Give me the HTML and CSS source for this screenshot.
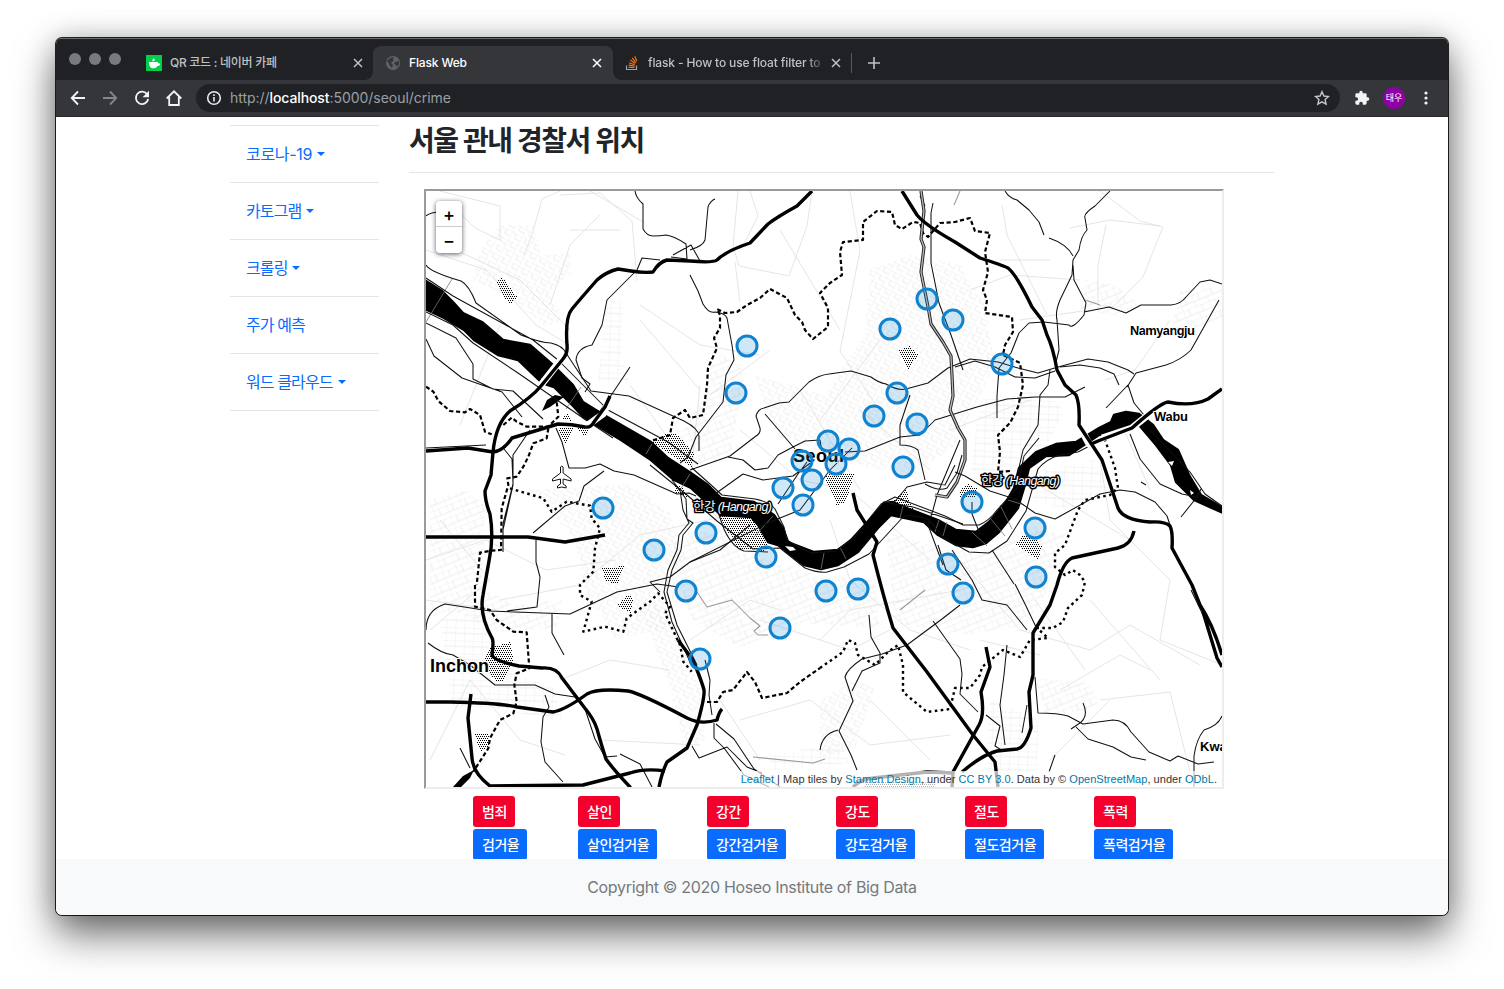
FILE: index.html
```html
<!DOCTYPE html>
<html lang="ko">
<head>
<meta charset="utf-8">
<title>Flask Web</title>
<link rel="stylesheet" href="styles.css">
</head>
<body>
<div class="window">
  <div class="tabstrip">
    <div class="lights"><i></i><i></i><i></i></div>
    <div class="tab tab-first">
      <svg class="favicon" viewBox="0 0 16 16"><path fill="#03cf4a" d="M0 0h16v16H0z"/><path fill="#fff" d="M3 7h9v1.200h1.200c1.400 0 1.200 2.900-2 2.900-.7 1.500-1.600 2.200-3.700 2.200C4.300 13.300 3 11 3 7zM7 3.200l2 1.300-1 1.700H6.300z"/></svg>
      <span class="tab-title t1">QR 코드 : 네이버 카페</span>
      <svg class="close" viewBox="0 0 10 10"><path d="M1 1l8 8M9 1L1 9"/></svg>
    </div>
    <div class="tab tab-active">
      <svg class="favicon" viewBox="0 0 16 16"><circle cx="8" cy="8" r="7" fill="#5f6368"/><path fill="#35363a" d="M2 6l3-3 4-1-1 2 1 1-3 3 2 2-1 3-2-2-1-2zM10 7l4-1v3l-2 3-1-2-2-1z"/></svg>
      <span class="tab-title t2">Flask Web</span>
      <svg class="close" viewBox="0 0 10 10"><path d="M1 1l8 8M9 1L1 9"/></svg>
    </div>
    <div class="tab tab-last">
      <svg class="favicon" viewBox="0 0 16 16" fill="none"><path stroke="#9aa6b0" stroke-width="1.200" d="M2.500 10.500v4h10v-4"/><path stroke="#f2711c" stroke-width="1.200" d="M4.500 12.400h6M4.600 10.200l6 .8M5 7.700l5.700 2M6.300 5l5 3.500M8.200 2.800l3.700 4.700M10.800 1.200l2 5"/></svg>
      <span class="tab-title t3">flask - How to use float filter to</span>
      <svg class="close" viewBox="0 0 10 10"><path d="M1 1l8 8M9 1L1 9"/></svg>
    </div>
    <svg class="plus" viewBox="0 0 12 12"><path d="M6 0v12M0 6h12"/></svg>
  </div>
  <div class="toolbar">
    <svg class="ico" viewBox="0 0 16 16"><path d="M15 8H2M8 1.500L1.700 8 8 14.500"/></svg>
    <svg class="ico dim" viewBox="0 0 16 16"><path d="M1 8h13M8 1.500L14.300 8 8 14.500"/></svg>
    <svg class="ico" viewBox="0 0 16 16"><path d="M13.300 4.500A6.200 6.200 0 1 0 14.200 9"/><path class="solid" d="M15 .8v6.400H8.600z"/></svg>
    <svg class="ico" viewBox="0 0 16 16"><path d="M.7 8.500L8 1.300l7.300 7.200M3.200 7v8h9.600V7"/></svg>
    <div class="omnibox">
      <svg class="info" viewBox="0 0 16 16"><circle cx="8" cy="8" r="6.300"/><path d="M8 7v4.500M8 4.300V6"/></svg>
      <span class="url">http://<b>localhost</b>:5000/seoul/crime</span>
      <svg class="star" viewBox="0 0 16 16"><path d="M8 1.800l1.900 4.200 4.600.5-3.400 3.100 1 4.500L8 11.800l-4.100 2.300 1-4.500-3.400-3.100 4.600-.5z"/></svg>
    </div>
    <svg class="puzzle" viewBox="0 0 24 24"><path d="M20.500 11H19V7a2 2 0 0 0-2-2h-4V3.500a2.500 2.500 0 0 0-5 0V5H4a2 2 0 0 0-2 2v3.800h1.500a2.700 2.700 0 0 1 0 5.400H2V20a2 2 0 0 0 2 2h3.800v-1.500a2.700 2.700 0 0 1 5.400 0V22H17a2 2 0 0 0 2-2v-4h1.500a2.500 2.500 0 0 0 0-5z"/></svg>
    <span class="avatar">태우</span>
    <svg class="dots" viewBox="0 0 4 14"><circle cx="2" cy="2" r="1.600"/><circle cx="2" cy="7" r="1.600"/><circle cx="2" cy="12" r="1.600"/></svg>
  </div>
  <div class="page">
    <div class="container">
      <ul class="side">
        <li><a class="s1 drop">코로나-19</a></li>
        <li><a class="drop">카토그램</a></li>
        <li><a class="drop">크롤링</a></li>
        <li><a>주가 예측</a></li>
        <li><a class="drop">워드 클라우드</a></li>
      </ul>
      <main class="content">
        <h3>서울 관내 경찰서 위치</h3>
        <hr>
        <div class="frame">
          <svg class="map" viewBox="426 191 796 596">
            <defs>
              <pattern id="dot" width="2" height="4" patternUnits="userSpaceOnUse"><path d="M0 0h1v1H0zM1 2h1v1H1z"/></pattern>
              <pattern id="grid" width="11" height="9" patternUnits="userSpaceOnUse" patternTransform="rotate(28)"><path d="M0 0h11M0 0v9M5 0v5M5 5h6" class="pl"/></pattern>
              <pattern id="grid2" width="14" height="12" patternUnits="userSpaceOnUse" patternTransform="rotate(-22)"><path d="M0 0h14M0 0v12M6 0v7M0 7h14" class="pl"/></pattern>
              <pattern id="grid3" width="9" height="13" patternUnits="userSpaceOnUse" patternTransform="rotate(2)"><path d="M0 0h9M0 0v13M0 6h9" class="pl"/></pattern>
            </defs>
            <g class="town">
              <path fill="url(#grid)" d="M480 250l20-25 33 0 8 30 28-2 3 20-22 18 15 30-20 5-32-25-40-20z"/>
              <path fill="url(#grid3)" d="M605 300l18 2-2 60 10 10-4 12-30-2 4-25z"/>
              <path fill="url(#grid2)" d="M430 500l35-10 20 15-3 80 30 20 50-5-5 28-60 4-40-20-27 4z"/>
              <path fill="url(#grid)" d="M530 490l100-6 40 30 15 50-20 65-50 10-30-50-10-50z"/>
              <path fill="url(#grid2)" d="M670 540l50-12 45 30 60 20 50 0 5 50-80-5-60 25-50-30z"/>
              <path fill="url(#grid2)" d="M885 530l60 20 50 0 35-25 35 10-20 60-20 30-60 10-70-12z"/>
              <path fill="url(#grid)" d="M870 270l40-15 50 10 25 40 10 60-40 80-40 30-60-10-80-30-20-60 70 20 40-60z"/>
              <path fill="url(#grid2)" d="M715 350l30 20-15 90-40 8-15-25 30-50z"/>
              <path fill="url(#grid3)" d="M980 400l60-10 25 20-25 50-30 20-40-5zM1045 470l50-10 14 30-40 20-38-10z"/>
              <path fill="url(#grid2)" d="M1085 280l30 5 25 20-25 10-35-5zM1035 678l55 5 10 25-55 8zM1180 290l42-3v30l-30 15-20-5z"/>
              <path fill="url(#grid3)" d="M440 620l45-8 8 40 30 25 30 10 10 35-50-10-60-5zM770 755l70-12 10 20-80 8zM990 700l50 20-5 66h-50z"/>
              <path fill="url(#grid)" d="M640 600l30 10 30 60 5 70-20 10-15-60zM820 700l35-20 20 8-20 60-35 10z"/>
            </g>
            <g class="faint">
              <path d="M440 191l60 15v35M500 240l-25-12-25-25M560 191l-18 8-10 36-8 20M560 195l40-2 32 28 5 60M590 191l55 32M570 330l-50-50-60-28M600 215l-30 30-20 60M426 250l60 20 50 55 30 18M570 230h50M500 325l-40 100M640 305l60 40 60 10M812 191l-5 35-18 50-50-10-6-20 5-55M750 191l8 25-15 30M735 262l5 40M770 350l-60 45M1002 205l5 30 40 80M1100 191l40 30 23 6-20 50-30 30-15-2 0-40 8-40M1070 228l40-8 50 6M970 290l40-15 70 5M1020 320l70-10M1170 320l-35 50-30 10M1050 260h-50"/>
              <path d="M426 560l60-20 60 30 70-10M440 520l50 60-60 50M500 600l80-15 60-50 90-20M630 385l50 70M700 385l-10 100 50 60M850 191l10 60-20 100 40 60M740 430l60 50 50 10 80 70M830 520l20 60 60 50 60 20M690 640l60-40 30 10M820 640l30-30 110-20M960 560l60 70 70 20 40-25 70 40M1090 600l70 80M1100 460l10 60 60 60-10 60 62 25M1120 420l30 70M1030 480l100 60M430 760l40-80 50 60 45 15M560 680l50-20 60 10M600 740l100 5M740 720l70-20 60 45 80-10M760 760l-40-60M870 700l60 60M1060 690l60-35 30 15M1100 700l70-8 20 80M980 640l60 15M1035 600l50 70M1050 760l60-60"/>
              <path d="M780 230l60 100M800 390l60 100M880 340l-60 80M860 410l70 60M1030 400l-80 30M640 320l60 70M426 600l70 10M760 620l90 30 40-20"/>
            </g>
            <g class="half" fill="url(#dot)">
              <path d="M496 281l6-4 15 20-8 8z"/><path d="M898 350l12-4 8 9-10 15z"/><path d="M558 427h17l-10 18zM575 425h18l-9 12zM560 418l8-4 4 7z"/><path d="M652 442l13-8h12l17 20-2 14z"/><path d="M674 484l10 4 5 10-14-6z"/><path d="M825 477l5-3h24l-5 18-4 10-8 4z"/><path d="M892 502l14-12 8 22z"/><path d="M720 516l30 1 18 25-3 9-28-2z"/><path d="M960 490l8-6 10 5-3 8h-15z"/><path d="M1016 545l6-10 14 4 6 8-4 13z"/><path d="M602 568l22-2-6 12 2 6-14-2z"/><path d="M617 606l11-12 5 3-2 16z"/><path d="M484 662l5-14 22-6 2 18-10 22-8-1z"/><path d="M475 733h13l2 12-10 7z"/><path d="M865 781h70v6h-70z"/>
            </g>
            <path class="water" d="M426 281l16 10 11 11 10 11 19 9 21 18 27 5 23 20 20 20 10 17 21 13 47 27 17 16 23 15 17 12 13 13 33 4 20 13 9 13 5 14 26 10 24-2 13-10 20-22 13-15 9-1 11 5 34 13 18 10 20 2 13-10 17-20 8-14 5-20 17-16 20-8 20-2 23-14 12-6 3-7 12-3 13 2 14 11 10 15 15 10 11 25 12 20 22 13v5l-29-13-18-18-5-17-15-20-17-20-6 3-34 7-30 20-23 1-17 12-5 20-6 20-19 24-13 11-13 4-17-2-18-10-14-13-33-7-13 13-20 24-20 13-17 4-17-4-26-20-10-3-10-17-7-8-30-2-30-27-17-8-23-20-30-20-37-22-10-11-20-20-12-4-24-23-20-5-24-15-10-10-20-12-17-8z"/>
            <path d="M453 787l10-11 11-6-4 8-9 9zM547 400l8-5 9 2-14 10-8 4z"/>
            <path class="wht" d="M785 546l8 1 3 3-6 1zM1168 462l6-1-2 5zM1190 490l4 3-3 2zM541 379l5-3-2 6z"/>
            <g class="bridge"><path d="M452 279l-26 43M581 387l-15 22M652 444l-6 10M690 474l-10 16M773 516l-20 22M824 553l-3 16M840 547l6 12M903 506l-3 12M939 520l-4 12M947 522l-4 14M1000 505l12 24M990 518l15 18M972 532l15 14M1008 500l16 5"/></g>
            <g class="bound" transform="translate(420 385) scale(.33333)">
              <path d="M18 5l22 15 15 28 35 30 45 4 15-10 30 18 15 50 20 8M250 120l25-22 15 12 30 15 65 0 30-30-5-45M385 130l-5 30-40 15-15 40-15 30-20 30-28 5 3 20-20 70-2 125-28 2-35 6-10 97"/>
              <path class="dotty" d="M270 310l100 30 25 40 45-30 70 12 5 38 25 30-15 60-5 70-40 40 0 30 35 20-25 90 65-15 55 15 10-40 70-50 25-25 35 40-15 20 45 95 10 50 25 30"/>
              <path d="M165 600l0 65 45 10 20 30 50 35 40 2 8 108-38 15-7 35 7 50-10 35-40 20-30 55-5 30-45 70"/>
            </g>
            <g class="bound">
              <path d="M707 702l10 0 6-10 10-2 14-18 8 10 7 16 25-5 13-11 20-14"/>
              <path class="dotty" d="M820 668l23-16 5-12 7 3 3 12 17 10 13-13 10-7 5 20 0 27 24 20 23-3 5-21 15 0 10-13 2-8 21-17 17 7 10-17 18-2-11-10 16 0 10-6 5-14 14-13 3-13-5-7-7-5-8 5-10-8 0-14 10-8 13-35 7-10 25-5 8-7-3-20-10-28"/>
              <path d="M1010 471l-12 1 2-20-2-17 12-12 8-16 5-22-3-22-17-8 2-10 8-13-1-15-27-4 2-13-4-10 5-18-3-20 5-19-15-2-5-13-15 4-15 1-12 14-5-4-3-10-7-1-11 7-7-4-3-13-15-1-14 11 0 18-20 2-3 10 2 23-12 8-10 10 8 15 0 19-15 12-8-9-3-8-7-7-8-17-17-9-10 9-13 7-10 7-12 1-8-4 3 6 0 13-6 10 3 10-9 20-1 17-4 30-13 3-5-8-12 8-3 17-22 7"/>
            </g>
            <g class="road">
              <path d="M426 278l27 18 80 44 25 20 20 20 30 30 60 32 30 22M426 312l27 13 20 18 45 30 65 45 30 20M426 323l30 15 17 26v15l20 10 20 2 30 28M426 339l8 17 28 22 40 14 20 25M426 265q4 7 35 16 8 4 15 22l45 32q20 8 30 8 12 3 15 10l25 38 38 5 55 25q15 8 15 15v15M426 216q4-4 15-4"/>
              <path d="M635 191q1 7 8 13v25q4 7 10 7 8 0 13-1 8 1 20 9l1 15-16-2M700 261l-9-16-18 10M690 250q13-4 15-10l3-33q2-6 7-8M690 275l8 16 5 13q6 10 12 8 10 1 12 6l5 27 2 15-8 15-3 27-27 35-8 20-8 6M660 260l-18-2-5 12-30 30-5 25-10 20q-15 3-16 15l6 18 8 6-5 8M630 367l-18 27-14 20"/>
              <path d="M426 448l60-3M556 428l6 14 7 26h16l15-4 14 7 20 4 43 19 12-1 7 3M604 471l-20 15-5 15-14 5-32 27M504 449l8 10 1 25-10 40v28M530 430l-17 25v30l-10 45M536 540v22l4 15-3 30-30 4M426 630q0-20 19-26l45 7 80 3 47-22 40-8 22 3M552 613v20l12 22M428 643q14 11 25 12l17 10 25 20 40 0 20 9 20 3 10 12 10 30 10 18 12-1M545 695l4 12-6 10-2 25 4 20 18 20M620 754l20 10 12 23M460 748l10 20"/>
              <path d="M672 480l8 10 3 20 6 13-10 12-2 15-9 20-4 22 8 30 18 40M677 487l9 12 1 20 6 4-10 12-2 15-9 20-5 22 10 33 20 40M660 592l-10-10 20-5 20-15 80-40 30-12 30-40 22-22M705 660l5 20-1 15 3 20M714 723v15l10 10 20 27 25 12M716 724l18 15 20 30 26 18M692 746l7 12 28-11 20 20 15 6"/>
              <path d="M690 470l40-14 26-20q5-3 4-8l-4-12q2-7 8-8l15-5 10-1 20-20q10-7 20-8l22-3 20 6q8 6 15 7 12 7 20 5l22-6 20-15 22-9 28 3 20 6 20 5 20-6 30-8 20 3 20 8 6 4M765 414l30 35M728 457l15 3 12 10 13-2 10-13 15-8 12-6 15-1 2 12M715 494l28-20 20 6 30-4 20-15M778 504l20-30 15-20M845 452l20-1 35-14 20-2 15-15 42-13 30-8 28-2 30 0 20-10M910 395l-10 30v20q12 0 18 5l7 30M925 484q14 8 22 4l10-15 5-18M892 505l15-18 20-5 18 3 10-20M960 440l-23 55-4 15-5 15 15 40M938 545l8 25 15 10M883 502l30 5 50 17"/>
              <path d="M920 196l5 10M933 203l-2 10v50l8 40 12 32 12 35"/>
              <path class="dbl" d="M921 191l3 20-3 28 3 8-3 25 8 40 2 12 12 18 8 14 2 40-3 14 8 18 7 12 0 20-8 22-10 15-12-2"/>
              <path class="dbl-in" d="M921 191l3 20-3 28 3 8-3 25 8 40 2 12 12 18 8 14 2 40-3 14 8 18 7 12 0 20-8 22-10 15-12-2"/>
              <path d="M692 468l18 16 12 11 33 4q15 3 20 10l9 18 3 13q15 10 26 13l22-2 18-12 28-35 14-7 50 19 18 9 16 0q10-4 18-15l20-22 7-32 15-18M650 465l37 30 30 26 36 28 27-1 25 20q12 5 22 4l17-5 25-13 35-38q14-1 25 4l15 18 25 14 20 1 18-12 19-30 12-42q8-10 22-14l18-3 25-13"/>
              <path d="M719 515l5 14q8 18 20 22l24 1M750 525l-30 25-30 12"/>
              <path d="M1005 191q4 7 12 9l12 10 10 12 5 13M1049 238q18 6 24 18M1110 191l-15 15q-12 8-10 12l2 12q-6 6-8 20l-6 10-1 15-12 25q-5 12-3 20l2 30-3 12M1073 265l1 15 12 23-2 12q-12 15-15 10l-25-3-15 1-10 10-8 20-12 15-2 28v22M1084 312l25-5 17 6 15-8h30q10-1 15-8l14-15 10-2 12 4M1219 300l-28 50q-10 10-25 15l-30 8-9 14M1060 367l20-2 20 3 14 6 5 11M955 367l20-6 20 6 20 10 20 1 20-7M1050 370l-2 15-8 10-2 30-15 25-5 22M1106 408l22-23 6 18 15 18"/>
              <path d="M1130 434l10 25 20 25 22 10 15 3 4-8M1197 497l-16 20M955 472l10 4 25 15 25 8 20 14 20 6 45-25 20-4 15 2 20 10 12 14 5 15M972 502l0 12 8 20M992 550l22 34M952 550l20 30 10 20 25 5 20 25M1150 430l40 42 15 22 17 12M1141 482l5 3"/>
              <path d="M960 605l-18 14-35 26-25 9-20 5q-15 10-17 18l8 24-14 30 12 24 6 15M869 615l2 22 9 16v10l-18 8-10 20M820 750q2-16 18-20M933 621l27 38 2 15-2 20 18 18M986 715l14 11-5 20 8 5M1007 645l-3 30-4 30 5 40M1035 677l3 36q20 0 30 3l15 8 30-4q12 0 18 12l18 20 21 9 8-5 20 8 16-2M1083 703q7 15-6 22l-6 4M1076 727l12 12 25 8 18 10 15 3M1222 716q-4 10-18 14-8 10-10 26v31M1027 705l-5 28M1055 755l-6 17M1015 584l10 20 12 25M1191 590l12 25"/>
              <path class="mid" d="M697 592l10 15 25-7 18 18 10 8-6 5 4 4h10M753 757l60 6 12-4"/>
              <path class="mid" d="M1085 300l15 5M900 610l25-20M960 191l-6 14"/>
            </g>
            <g class="casing"><path d="M541 385l22-28M585 427l18-13 6-12M1079 425l9 17 14 18M1158 407l-26 21-30 10"/></g>
            <g class="bold">
              <path d="M812 191l-15 15q-20 11-29 18l-18 19q-24 8-33 17-4 3-27 1l-23-1q-8 2-14 12-10 1-22-1l-13-2q-12 3-21 11-15 17-25 29-7 8-5 36 1 8-4 14l-22 27q-10 12-31 25-14 12-17 41l-2 23-6 16q0 10 5 23 4 24-1 47l-6 34q-4 20 9 43 2 3 0 17 2 6 27 11l23 2q15-1 20 10l22 29q10 12 13 22 5 18 9 30 7 10 24 28l2 6"/>
              <path d="M426 451l42-3 25 4q10-1 19-14l46-14q14 0 27 3 6 1 9-5l11-15 5-11M426 537h102l37 5 40-7M426 702h24q50 1 67 5l36 5q12-2 34-18 10-6 41-3 12 2 59 27 14 7 30 2 2-8 5-11M471 694l-3 24 4 40q1 15 18 28l93-1 47-12q15-5 35-2"/>
              <path d="M678 640l15 20q9 22 11 30 1 7-7 35l-10 23-20 14q-5 10-8 25M853 493l4 17 20 32-4 13q10 40 20 73l34 44 46 63 22 27 3 25"/>
              <path d="M902 191l15 24q8 10 38 27l25 16q22 7 28 10 8 6 24 39l10 13 5 15q6 12 10 35l8 15 11 10q4 9 3 30l23 35 16 48q5 12 32 14 15-1 20 4 3 6 2 22l20 37 8 20q13 20 22 50M1203 612q6 20 14 46l5 9M1222 389l-14 10q-16 8-40 3-8 1-36 26l-34 13-7 3M1134 531q-3 14-16 17l-46 10q-9 4-15 27l-7 20-17 28v42l-4 17 2 36q-6 20-14 21l-20 2q-15 4-35 21M986 647l4 20-9 25q4 23-2 33l-26 47-1 15"/>
              <path d="M853 787q8-8 20-9l54-6 26 1"/>
            </g>
            <path class="plane" d="M560.500 467q1.300-2 2.600 0v6l8 6v2l-8-2v5l3 2v2l-4.300-1-4.300 1v-2l3-2v-5l-8 2v-2l8-6z"/>
            <g class="label">
              <text x="1130" y="335" class="l13" textLength="65">Namyangju</text>
              <text x="1154" y="421" class="l13" textLength="34">Wabu</text>
              <text x="1200" y="751" class="l13">Kwa</text>
              <text x="430" y="672" class="l18" textLength="59">Inchon</text>
              <text x="793" y="462" class="l18" textLength="51">Seoul</text>
              <text x="693" y="511" class="river"><tspan>한강</tspan> <tspan font-style="italic">(Hangang)</tspan></text>
              <text x="981" y="485" class="river"><tspan>한강</tspan> <tspan font-style="italic">(Hangang)</tspan></text>
            </g>
            <g class="marker">
              <circle cx="927" cy="299" r="10"/><circle cx="953" cy="320" r="10"/><circle cx="890" cy="329" r="10"/><circle cx="747" cy="346" r="10"/><circle cx="1002" cy="364" r="10"/><circle cx="736" cy="393" r="10"/><circle cx="897" cy="393" r="10"/><circle cx="874" cy="416" r="10"/><circle cx="917" cy="424" r="10"/><circle cx="828" cy="441" r="10"/><circle cx="849" cy="449" r="10"/><circle cx="802" cy="461" r="10"/><circle cx="836" cy="464" r="10"/><circle cx="903" cy="467" r="10"/><circle cx="812" cy="480" r="10"/><circle cx="783" cy="488" r="10"/><circle cx="803" cy="505" r="10"/><circle cx="603" cy="508" r="10"/><circle cx="972" cy="502" r="10"/><circle cx="1035" cy="528" r="10"/><circle cx="706" cy="533" r="10"/><circle cx="654" cy="550" r="10"/><circle cx="766" cy="557" r="10"/><circle cx="948" cy="564" r="10"/><circle cx="1036" cy="577" r="10"/><circle cx="686" cy="591" r="10"/><circle cx="826" cy="591" r="10"/><circle cx="858" cy="589" r="10"/><circle cx="963" cy="593" r="10"/><circle cx="780" cy="628" r="10"/><circle cx="700" cy="659" r="10"/>
            </g>
          </svg>
          <div class="zoom"><span>+</span><span>−</span></div>
          <div class="attr"><a>Leaflet</a> | Map tiles by <a>Stamen Design</a>, under <a>CC BY 3.0</a>. Data by © <a>OpenStreetMap</a>, under <a>ODbL</a>.</div>
        </div>
        <div class="buttons">
          <div><button class="red">범죄</button><button class="blue">검거율</button></div>
          <div><button class="red">살인</button><button class="blue">살인검거율</button></div>
          <div><button class="red">강간</button><button class="blue">강간검거율</button></div>
          <div><button class="red">강도</button><button class="blue">강도검거율</button></div>
          <div><button class="red">절도</button><button class="blue">절도검거율</button></div>
          <div><button class="red">폭력</button><button class="blue">폭력검거율</button></div>
        </div>
      </main>
    </div>
    <footer><span>Copyright © 2020 Hoseo Institute of Big Data</span></footer>
  </div>
</div>
</body>
</html>
```
FILE: styles.css
```css
* { box-sizing: border-box; }
body { margin: 0; padding: 38px 56px 0; height: 989px; overflow: hidden; background: #fff; font-family: Inter, "Noto Sans CJK KR", sans-serif; }
.window { width: 1392px; height: 877px; border-radius: 6px; overflow: hidden; background: #fff; display: flex; flex-direction: column; box-shadow: 0 0 0 1px rgba(0,0,0,.85), 0 20px 40px rgba(0,0,0,.55), 0 0 28px rgba(0,0,0,.22); }
.tabstrip { height: 42px; background: #202124; border-top: 1px solid #6b6c6f; display: flex; align-items: flex-end; flex: none; }
.lights { display: flex; gap: 8px; padding: 0 0 15px 13px; width: 77px; }
.lights i { width: 12px; height: 12px; border-radius: 50%; background: #797a7d; }
.tab { height: 34px; width: 240px; display: flex; align-items: center; font-size: 12px; font-weight: 500; color: #bdc1c6; padding: 0 11px 0 12px; }
.tab-first { padding-left: 13px; padding-right: 10px; }
.tab-active { position: relative; background: #35363a; border-radius: 8px 8px 0 0; color: #fff; }
.tab-active::before, .tab-active::after { content: ""; position: absolute; bottom: 0; width: 8px; height: 8px; }
.tab-active::before { left: -8px; background: radial-gradient(circle at 0 0, transparent 7.5px, #35363a 8px); }
.tab-active::after { right: -8px; background: radial-gradient(circle at 100% 0, transparent 7.5px, #35363a 8px); }
.tab-last { width: 239px; padding-left: 11px; background: linear-gradient(#55575b, #55575b) right 7px / 1px 20px no-repeat; }
.favicon { width: 16px; height: 16px; flex: none; margin-right: 8px; }
.tab-title { flex: 1; white-space: nowrap; overflow: hidden; line-height: 18px; }
.t1 { letter-spacing: -.28px; }
.t2 { letter-spacing: -.15px; }
.t3 { letter-spacing: -.13px; -webkit-mask-image: linear-gradient(90deg, #000 88%, transparent); mask-image: linear-gradient(90deg, #000 88%, transparent); margin-right: 4px; }
.close { width: 10px; height: 10px; flex: none; fill: none; stroke: currentColor; stroke-width: 1.5; }
.plus { width: 12px; height: 12px; fill: none; stroke: #bdc1c6; stroke-width: 1.6; margin: 0 0 11px 16px; }
.toolbar { height: 37px; flex: none; background: #35363a; border-bottom: 1px solid #27282b; display: flex; align-items: center; padding: 0 19px 0 14px; }
.ico { width: 16px; height: 16px; fill: none; stroke: #f1f3f4; stroke-width: 1.8; margin-right: 16px; }
.ico .solid { fill: #f1f3f4; stroke: none; }
.ico.dim { stroke: #84868a; }
.omnibox { width: 1144px; height: 28px; margin-left: -2px; border-radius: 14px; background: #202124; display: flex; align-items: center; padding: 0 10px; }
.info { width: 16px; height: 16px; fill: none; stroke: #e8eaed; stroke-width: 1.6; margin-right: 8px; }
.url { flex: 1; font-size: 14px; line-height: 16px; padding-bottom: 1px; color: #9aa0a6; letter-spacing: -.04px; }
.url b { font-weight: 500; color: #fff; letter-spacing: -.1px; }
.star { width: 16px; height: 16px; fill: none; stroke: #c4c7cb; stroke-width: 1.4; }
.puzzle { width: 16px; height: 16px; fill: #f1f3f4; margin-left: 14px; }
.avatar { width: 22px; height: 22px; border-radius: 50%; background: #8e00a5; color: #fff; font: 9px/21px "Noto Sans CJK KR", sans-serif; text-align: center; margin: 0 19px 0 13px; flex: none; }
.dots { width: 4px; height: 14px; fill: #f1f3f4; }
.page { flex: 1; display: flex; flex-direction: column; justify-content: space-between; min-height: 0; }
.container { display: flex; gap: 30px; padding-left: 174px; height: 742px; }
.side { list-style: none; margin: 8px 0 0; padding: 0; width: 149px; border-top: 1px solid #e5e5e5; height: 287px; }
.side li { height: 57px; border-bottom: 1px solid #e5e5e5; padding: 0 16px; display: flex; align-items: center; }
.side a { color: #0a6cff; font-size: 16px; line-height: 24px; white-space: nowrap; letter-spacing: -.9px; }
.side .s1 { letter-spacing: -.3px; }
.drop::after { content: ""; display: inline-block; margin-left: 5px; vertical-align: 4px; border: 4.8px solid transparent; border-top-color: currentColor; border-bottom: 0; }
.content { width: 865px; }
h3 { margin: 7px 0 0; font-size: 28px; line-height: 34px; font-weight: 700; color: #212529; white-space: nowrap; letter-spacing: -1.4px; }
hr { border: 0; border-top: 1px solid #e5e5e5; margin: 14px 0 16px; }
.frame { position: relative; width: 800px; height: 600px; margin-left: 15px; border: 2px solid #ededed; border-top-color: #9a9a9a; border-left-color: #9a9a9a; overflow: hidden; }
.map { display: block; width: 796px; height: 596px; }
.pl { fill: none; stroke: #d9d9d9; stroke-width: .6; }
.town { opacity: .75; }
.half { shape-rendering: crispEdges; }
.faint { fill: none; stroke: #e2e2e2; stroke-width: .9; }
.water { stroke: #000; stroke-width: 2.4; stroke-linejoin: round; }
.bridge { fill: none; stroke: #777; stroke-width: .8; }
.road { fill: none; stroke: #111; stroke-width: 1.05; stroke-linejoin: round; }
.road .mid { stroke: #999; }
.road .dbl { stroke: #222; stroke-width: 3.2; }
.road .dbl-in { stroke: #bbb; stroke-width: 1.3; }
.bound { fill: none; stroke: #000; stroke-linejoin: round; }
.bound path { stroke-width: 2.2; stroke-dasharray: 4.2 2.6; vector-effect: non-scaling-stroke; }
.bound .dotty { stroke-width: 2.4; stroke-dasharray: 2.6 3.4; }
.bold { fill: none; stroke: #000; stroke-width: 3.4; stroke-linejoin: round; }
.casing { fill: none; stroke: #fff; stroke-width: 7; }
.wht { fill: #fff; }
.plane { fill: #fff; stroke: #111; stroke-width: 1; stroke-linejoin: round; }
.label { font-family: "Liberation Sans", "Noto Sans CJK KR", sans-serif; font-weight: 700; stroke: #fff; stroke-width: 2px; paint-order: stroke; stroke-linejoin: round; }
.l13 { font-size: 13px; }
.l18 { font-size: 18px; }
.river { font-size: 12.5px; font-weight: 400; fill: #fff; stroke: #000; stroke-width: 3px; letter-spacing: -.6px; }
.marker { fill: rgba(16,133,208,.2); stroke: #1083d0; stroke-width: 3; }
.zoom { position: absolute; left: 10px; top: 10px; width: 26px; height: 52px; background: #fff; border-radius: 4px; box-shadow: 0 1px 5px rgba(0,0,0,.65); font: 500 18px/26px Inter, sans-serif; text-align: center; }
.zoom span { display: block; height: 26px; line-height: 27px; }
.zoom span:first-child { border-bottom: 1px solid #ccc; }
.attr { position: absolute; right: 0; bottom: 0; height: 16px; padding: 0 5px; background: rgba(255,255,255,.7); font: 11px/16px "Liberation Sans", sans-serif; letter-spacing: .035px; color: #333; white-space: nowrap; }
.attr a { color: #0078a8; }
.buttons { display: grid; grid-template-columns: 105px repeat(5, 129px); margin: 7px 0 0 64px; }
.buttons div { display: flex; flex-direction: column; align-items: flex-start; gap: 2px; }
button { border: 0; border-radius: 3px; height: 31px; padding: 0 8px 1px 9px; color: #fff; font: 500 14px/30px "Noto Sans CJK KR", sans-serif; letter-spacing: -.45px; white-space: nowrap; }
.red { background: #f4002d; }
.blue { background: #0a6cff; }
footer { position: relative; height: 56px; flex: none; background: #f8f9fa; display: flex; justify-content: center; align-items: center; color: #75797d; font-size: 16px; }
footer span { letter-spacing: -.33px; }
```
